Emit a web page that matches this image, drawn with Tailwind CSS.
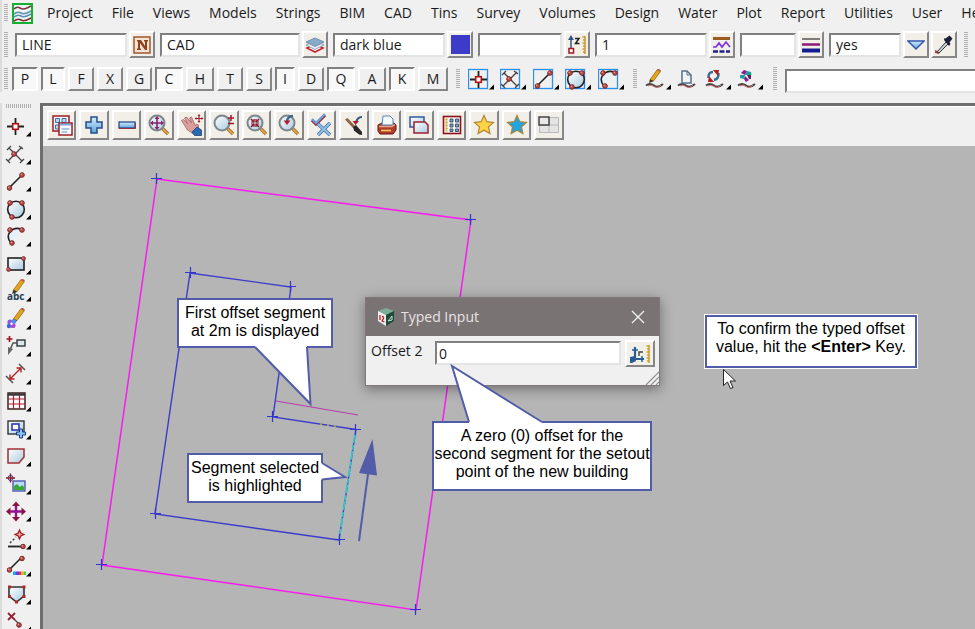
<!DOCTYPE html>
<html lang="en">
<head>
    <meta charset="UTF-8">
    <meta name="viewport" content="width=device-width, initial-scale=1.0">
    <title>Typed Input</title>
    <script src="https://cdn.jsdelivr.net/npm/@tailwindcss/browser@4"></script>
</head>
<body class="h-screen flex flex-col overflow-hidden bg-[#f0f0f0] text-[#1a1a1a] text-sm font-['Open_Sans','Noto_Sans',sans-serif]">

    <!-- Shared icon symbols -->
    <svg class="absolute w-0 h-0" aria-hidden="true">
        <defs>
            <linearGradient id="glass" x1="0" y1="0" x2="1" y2="1"><stop offset="0" stop-color="#fff"/><stop offset="1" stop-color="#a9cbe0"/></linearGradient>
            <linearGradient id="blue" x1="0" y1="0" x2="0" y2="1"><stop offset="0" stop-color="#d4ecfa"/><stop offset="1" stop-color="#5aa4dc"/></linearGradient>
            <pattern id="dots-v" width="4" height="2" patternUnits="userSpaceOnUse"><rect width="4" height="1" fill="#b0b0b0"/></pattern>
            <pattern id="dots-h" width="2" height="4" patternUnits="userSpaceOnUse"><rect width="1" height="4" fill="#b0b0b0"/></pattern>
        </defs>
        <symbol id="ball" viewBox="0 0 6 6"><circle cx="3" cy="3" r="2.3" fill="#b85050" stroke="#7c2020"/><circle cx="2.3" cy="2.3" r=".8" fill="#e0a0a0"/></symbol>
        <symbol id="more" viewBox="0 0 28 24"><path d="M26 17.5V22.500H21z" fill="#000"/></symbol>
        <symbol id="box" viewBox="0 0 28 24"><rect x=".5" y="2.500" width="19" height="19" fill="none" stroke="#2a90f0" stroke-width="1.300"/></symbol>

        <!-- Drawing tools -->
        <symbol id="point" viewBox="0 0 28 24"><path d="M10.500 4v5M10.500 16v5M2 12.500h5M14 12.500h5" stroke="#222" stroke-width="1.800"/><rect x="7.700" y="9.700" width="5.600" height="5.600" fill="#fff" stroke="#b01010" stroke-width="1.600"/></symbol>
        <symbol id="intersect" viewBox="0 0 28 24"><path d="M4 6l13 13M17 5L3 19M2 8l4-4M14 4l4 3M1 17l4 4M15 21l4-4" stroke="#444" stroke-width="1.300" fill="none"/><use href="#ball" x="6" y="9" width="6" height="6"/></symbol>
        <symbol id="line" viewBox="0 0 28 24"><path d="M4 19L17 6" stroke="#222" stroke-width="1.600"/><use href="#ball" x="1.500" y="16" width="6" height="6"/><use href="#ball" x="14" y="3" width="6" height="6"/></symbol>
        <symbol id="circle" viewBox="0 0 28 24"><circle cx="11" cy="12.500" r="8.300" fill="url(#glass)" stroke="#222" stroke-width="1.600"/><use href="#ball" x="2" y="3" width="6" height="6"/><use href="#ball" x="14" y="3" width="6" height="6"/><use href="#ball" x="4" y="17" width="6" height="6"/></symbol>
        <symbol id="arc" viewBox="0 0 28 24"><path d="M6 19Q2 13 5 8T16 5L12 12z" fill="#e6f0f8"/><path d="M6 19Q1 13 5 8T16 5" fill="none" stroke="#222" stroke-width="1.600"/><use href="#ball" x="2" y="3" width="6" height="6"/><use href="#ball" x="14" y="3" width="6" height="6"/><use href="#ball" x="4" y="16" width="6" height="6"/></symbol>
        <symbol id="rectangle" viewBox="0 0 28 24"><rect x="3" y="6" width="16" height="12" fill="url(#glass)" stroke="#222" stroke-width="1.600"/><use href="#ball" x="1" y="15" width="5" height="5"/><use href="#ball" x="16" y="4" width="5" height="5"/></symbol>
        <symbol id="pencil" viewBox="0 0 20 20"><path d="M5 12L13 1l4 2-8 11-5 2z" fill="#e3a51c" stroke="#8a6210" stroke-width=".8"/><path d="M13 1l1.500-1.500 3 2L17 3z" fill="#c05050"/><path d="M5 12l4 2-5 2z" fill="#333"/></symbol>
        <symbol id="text" viewBox="0 0 28 24"><use href="#pencil" x="4" y="0" width="18" height="18"/><text x="2" y="21" font-size="10" font-weight="700" fill="#24405a" font-family="Open Sans">abc</text></symbol>
        <symbol id="paint" viewBox="0 0 28 24"><use href="#pencil" x="4" y="1" width="18" height="18"/><circle cx="5" cy="15" r="2.600" fill="#8a58e0"/><circle cx="9" cy="14.500" r="2.300" fill="#4a90e8"/><circle cx="8" cy="18.500" r="2.600" fill="#b04ad8"/><circle cx="4" cy="19" r="2.200" fill="#4464d8"/><circle cx="6.500" cy="16.800" r="1.200" fill="#fff"/></symbol>
        <symbol id="leader" viewBox="0 0 28 24"><path d="M4.500 2v6M1.500 5h6" stroke="#a01020" stroke-width="1.600"/><rect x="12" y="6" width="8" height="6" fill="#d8e8f0" stroke="#333" stroke-width="1.400"/><path d="M12 9H8L5 16" fill="none" stroke="#555" stroke-width="1.500"/><path d="M3 13l5 2-5 6z" fill="#666"/></symbol>
        <symbol id="dimension" viewBox="0 0 28 24"><path d="M14 2l6 6M1 14l7 7" stroke="#555" stroke-width="1.600"/><path d="M5 17L16 6M5 12.500V17h4.500M11.500 6H16v4.500" fill="none" stroke="#b82020" stroke-width="1.400"/></symbol>
        <symbol id="table" viewBox="0 0 28 24"><rect x="3" y="4" width="17" height="16" fill="#fff" stroke="#3a2020" stroke-width="1.500"/><path d="M3 5.500h17" stroke="#3a3a3a" stroke-width="2.500"/><path d="M3 10h17M3 15h17M8.500 6v14M14.500 6v14" stroke="#b01c30" stroke-width="1.200"/></symbol>
        <symbol id="insert" viewBox="0 0 28 24"><rect x="3" y="4" width="16" height="13" fill="url(#glass)" stroke="#333" stroke-width="1.400"/><rect x="7" y="7" width="7" height="6" fill="#fff" stroke="#2a3ab0" stroke-width="1.600"/><path d="M14.500 12h3v3h3v3h-3v3h-3v-3h-3v-3h3z" fill="#8ac4f0" stroke="#1a3c80"/></symbol>
        <symbol id="polygon" viewBox="0 0 28 24"><path d="M3 5h16v8l-5 6H3z" fill="url(#glass)" stroke="#a03030" stroke-width="1.500"/></symbol>
        <symbol id="image" viewBox="0 0 28 24"><rect x="8" y="9" width="12" height="10" fill="#b8dcf4" stroke="#5058b0" stroke-width="1.400"/><path d="M9 18v-4l3-2 3 3 2-2 2 2v3z" fill="#3ca838"/><circle cx="5.500" cy="6" r="2.500" fill="#fff" stroke="#2a3c90"/><path d="M5.500 1.500v9M1 6h9" stroke="#901828" stroke-width="1.400"/></symbol>
        <symbol id="move" viewBox="0 0 28 24"><path d="M11 5v15M3.500 12.500h15" stroke="#901090" stroke-width="2.400"/><path d="M11 2.500l4 4.500H7zM11 22.500l4-4.500H7zM1 12.500l4.500-4v8zM21 12.500l-4.500-4v8z" fill="#8a1440"/></symbol>
        <symbol id="snap" viewBox="0 0 28 24"><path d="M3 19.500h14" stroke="#222" stroke-width="1.800"/><path d="M5 16l6-6" stroke="#333" stroke-width="1.400" stroke-dasharray="2 2"/><path d="M14.500 3l1.300 3 3.200 1.500-3.200 1.500-1.300 3-1.300-3L10 7.500 13.200 6z" fill="#e8a0a0" stroke="#a01818" stroke-width="1.200"/><use href="#ball" x="15" y="16.500" width="6" height="6"/></symbol>
        <symbol id="colour" viewBox="0 0 28 24"><path d="M4 16L16 4" stroke="#222" stroke-width="1.600"/><use href="#ball" x="1.500" y="13" width="6" height="6"/><use href="#ball" x="14" y="1.500" width="6" height="6"/><path d="M8 17.500h3v3.500H8z" fill="#18a0f0"/><path d="M11 17.500h3v3.500h-3z" fill="#7038e0"/><path d="M14 17.500h2.500v3.500H14z" fill="#e83060"/><path d="M16.500 17.500h2.500v3.500h-2.500z" fill="#f0b020"/><path d="M19 17.500h2v3.500h-2z" fill="#30d850"/></symbol>
        <symbol id="fence" viewBox="0 0 28 24"><path d="M4 5h15v9l-7.500 6L4 14z" fill="url(#glass)" stroke="#333" stroke-width="1.600"/><path d="M3 3.500h3v3H3zM17.500 3.500h3v3h-3zM17.500 13h3v3h-3zM3 13h3v3H3zM10 18.500h3v3h-3z" fill="#b02828"/></symbol>
        <symbol id="delete" viewBox="0 0 28 24"><path d="M3 4l7 7M10 4l-7 7" stroke="#982030" stroke-width="1.800"/><path d="M10 11l3 3" stroke="#555" stroke-width="1.400"/><use href="#ball" x="11" y="13" width="6" height="6"/></symbol>

        <!-- Edit tools -->
        <symbol id="wave" viewBox="0 0 28 24"><path d="M1 18.500q4-3 8 0t9-1.500" fill="none" stroke="#444" stroke-width="2"/><path d="M3 19q3-2 6 .5t7-1.500" fill="none" stroke="#d07070"/></symbol>
        <symbol id="edit" viewBox="0 0 28 24"><use href="#wave"/><use href="#pencil" x="1" y="2" width="17" height="17"/></symbol>
        <symbol id="page" viewBox="0 0 28 24"><use href="#wave"/><path d="M5 4h5l4 4v8H5z" fill="#eef4f8" stroke="#56708a" stroke-width="1.500"/><path d="M10 4v4h4" fill="none" stroke="#56708a"/></symbol>
        <symbol id="swap" viewBox="0 0 28 24"><use href="#wave"/><path d="M3.500 11Q3 5 8 5" fill="none" stroke="#3a6c9a" stroke-width="2.400"/><path d="M13.500 6q.5 6-4.500 7" fill="none" stroke="#3a6c9a" stroke-width="2.400"/><path d="M8 3h6l-1 6zM9 15H3l1-6z" fill="#b02020"/></symbol>
        <symbol id="spin" viewBox="0 0 28 24"><use href="#wave"/><path d="M8 8L4 6l3-3 3 1z" fill="#8a1890"/><path d="M8 8l2-4 4 1 .5 3z" fill="#1aa098"/><path d="M8 9l4 4-3 2-2-3z" fill="#8a1890"/><path d="M8 8l-1 4-4-1v-3z" fill="#1aa098"/><path d="M10 8l4 0 0 4-2 0z" fill="#5c2060"/></symbol>

        <!-- View toolbar -->
        <symbol id="lens" viewBox="0 0 24 24"><path d="M15 15l6 6" stroke="#a86a20" stroke-width="3.400"/><path d="M15 15l6 6" stroke="#e8b050" stroke-width="1.500"/><circle cx="10" cy="10" r="7.500" fill="url(#glass)" stroke="#7c868c" stroke-width="2"/></symbol>
        <symbol id="v-menu" viewBox="0 0 24 24"><rect x="3" y="3" width="16" height="15" fill="#f4f8fc" stroke="#a01c28" stroke-width="1.500"/><path d="M5.500 5.500h4v4h-4zM12 5.500h4v4h-4zM5.500 12h4v4h-4z" fill="#b8d8f0" stroke="#3c70b0"/><rect x="9" y="10" width="13" height="12" fill="#fff" stroke="#a01c28" stroke-width="1.500"/><path d="M10 11.500h11" stroke="#70a8dc" stroke-width="2"/><path d="M11.500 16h8M11.500 19h6" stroke="#5a90c8"/></symbol>
        <symbol id="v-plus" viewBox="0 0 24 24"><path d="M9 4h6v5h5v6h-5v5H9v-5H4V9h5z" fill="url(#blue)" stroke="#284c88" stroke-width="1.500"/></symbol>
        <symbol id="v-minus" viewBox="0 0 24 24"><rect x="4" y="9" width="16" height="6" fill="url(#blue)" stroke="#284c88" stroke-width="1.300"/><path d="M4 15.500h16.500V10" fill="none" stroke="#983040"/></symbol>
        <symbol id="v-fit" viewBox="0 0 24 24"><use href="#lens"/><path d="M10 5v10M5 10h10" stroke="#8a2068" stroke-width="1.600"/><path d="M10 3l2.500 3h-5zM10 17l2.500-3h-5zM3 10l3-2.500v5zM17 10l-3-2.500v5z" fill="#8a2068"/></symbol>
        <symbol id="v-pan" viewBox="0 0 24 24"><path d="M1.500 7.500l2-1 4 4-3-5.500 2-1 5 6-2-5 2-1 4 9 1-2 2 1v4l-5 5-6-4z" fill="#dc9c9c" stroke="#a06868" stroke-width=".8"/><path d="M12 19l5-5 4.500 3v5.500h-7z" fill="#2a68b0" stroke="#1c4478" stroke-width=".8"/><path d="M19 2v7M15.500 5.500h7" stroke="#a02030" stroke-width="1.200"/><path d="M19 1l1.500 2h-3zM19 10l1.500-2h-3zM14.500 5.500l2-1.500v3zM23.500 5.500l-2-1.500v3z" fill="#a02030"/></symbol>
        <symbol id="v-scale" viewBox="0 0 24 24"><use href="#lens"/><path d="M19 2v6M16 5h6M16 10.500h6" stroke="#a81828" stroke-width="1.500"/></symbol>
        <symbol id="v-shrink" viewBox="0 0 24 24"><use href="#lens"/><path d="M6 6l3 3M14 6l-3 3M6 14l3-3M14 14l-3-3" stroke="#8a1020" stroke-width="1.500"/><path d="M6 9h3V6M14 9h-3V6M6 11h3v3M14 11h-3v3" fill="none" stroke="#8a1020" stroke-width="1.200"/></symbol>
        <symbol id="v-prev" viewBox="0 0 24 24"><use href="#lens"/><path d="M16 3q-6 0-6 6" fill="none" stroke="#3c6890" stroke-width="2.400"/><path d="M6.500 7.500h7L10 12z" fill="#b02030"/></symbol>
        <symbol id="v-check" viewBox="0 0 24 24"><path d="M2 7l4 4 9-9" fill="none" stroke="#982c40" stroke-width="3.200"/><path d="M2 6l4 4 9-9" fill="none" stroke="#68a4dc" stroke-width="2.200"/><path d="M8 11l12 11M20 10L8 22" stroke="#4c6c98" stroke-width="3.600"/><path d="M8 11l12 11M20 10L8 22" stroke="#8cc0ec" stroke-width="2.200"/></symbol>
        <symbol id="v-brush" viewBox="0 0 24 24"><path d="M3 6.500L5.500 5l7.500 8-2 2z" fill="#8c6444"/><path d="M11 14l3-2 6 7v3l-3-.5-5-4z" fill="#282828"/><path d="M20 4q-5 0-6 6" fill="none" stroke="#37587c" stroke-width="2.200"/><path d="M10.500 8h6.500l-3.500 4z" fill="#b02030"/></symbol>
        <symbol id="v-print" viewBox="0 0 24 24"><path d="M3 12l4-2h12l2 2v5l-3 4H5l-2-3z" fill="#b03c2c" stroke="#681410"/><path d="M8 3h7l3 3v6H7z" fill="#f4faff" stroke="#4c84b8"/><path d="M4 13.500h13l3-2" fill="none" stroke="#e8a890" stroke-width="1.500"/><path d="M6 17.500h10" stroke="#f0cc60" stroke-width="1.600"/></symbol>
        <symbol id="v-copy" viewBox="0 0 24 24"><rect x="3" y="4" width="14" height="10" fill="url(#glass)" stroke="#32589c" stroke-width="1.500"/><path d="M7 9h11l3 3v8H7z" fill="url(#glass)" stroke="#9c2030" stroke-width="1.500"/></symbol>
        <symbol id="v-grid" viewBox="0 0 24 24"><rect x="3.500" y="3.500" width="17" height="17" fill="#fdf6ec" stroke="#8c1020" stroke-width="1.600"/><path d="M10 6h3v3h-3zM15.500 6h3v3h-3zM10 11h3v3h-3zM15.500 11h3v3h-3zM10 16h3v2.500h-3zM15.500 16h3v2.500h-3z" fill="#7aa4d0" stroke="#203c60" stroke-width=".8"/><path d="M6.500 5.500v13" stroke="#c0a020" stroke-width="2" stroke-dasharray="2 1"/></symbol>
        <symbol id="v-star" viewBox="0 0 24 24"><path d="M12 2.500l2.800 6.200 6.700.7-5 4.500 1.400 6.700L12 17.200l-5.900 3.400 1.400-6.700-5-4.500 6.700-.7z" fill="currentColor" stroke="#b08434" stroke-width="1.200"/></symbol>
        <symbol id="v-layout" viewBox="0 0 24 24"><path d="M2.500 4.500h19v15h-19zM12 4.500v15M2.500 12h19" fill="#e4e4e4" stroke="#b8b8b8"/><rect x="2" y="4" width="10" height="8" fill="#e8e8e8" stroke="#444" stroke-width="1.500"/></symbol>
    </svg>

    <header class="shrink-0 border-l-2 border-[#dcdcdc]">
        <!-- Menu bar -->
        <nav class="flex h-[26px] items-center whitespace-nowrap overflow-hidden">
            <svg class="shrink-0 ml-0.5 mr-1.5" width="4" height="18"><rect width="4" height="18" fill="url(#dots-v)"/></svg>
            <svg class="shrink-0 -ml-0.5 mr-[14px]" width="21" height="21" viewBox="0 0 21 21"><rect x="1" y="1" width="19" height="19" fill="#eef4f4" stroke="#16b030" stroke-width="2"/><path d="M2 6q3-3 6-1t7 0l4-2" fill="none" stroke="#7c3440" stroke-width="1.600"/><path d="M2 11q4-3 7-1t10-2M2 14q4-3 7-1t10-2" fill="none" stroke="#5890b8" stroke-width="1.600"/><path d="M2 18q4-3 7-1t10-2" fill="none" stroke="#802c38" stroke-width="1.600"/></svg>
            <div class="flex gap-[19px]">
                <a href="#">Project</a>
                <a href="#">File</a>
                <a href="#">Views</a>
                <a href="#">Models</a>
                <a href="#">Strings</a>
                <a href="#">BIM</a>
                <a href="#">CAD</a>
                <a href="#">Tins</a>
                <a href="#">Survey</a>
                <a href="#">Volumes</a>
                <a href="#">Design</a>
                <a href="#">Water</a>
                <a href="#">Plot</a>
                <a href="#">Report</a>
                <a href="#">Utilities</a>
                <a href="#">User</a>
                <a href="#">Help</a>
            </div>
        </nav>

        <!-- String attributes -->
        <div class="mt-[5px] flex h-[27px] items-center gap-[5px] *:shrink-0 [&_input]:h-6 [&_input]:min-w-0 [&_input]:border-2 [&_input]:border-t-[#808080] [&_input]:border-l-[#808080] [&_input]:border-b-[#e4e4e4] [&_input]:border-r-[#e4e4e4] [&_input]:bg-white [&_input]:px-[5px] [&_button]:flex [&_button]:h-[27px] [&_button]:w-[26px] [&_button]:items-center [&_button]:justify-center [&_button]:border-2 [&_button]:border-t-white [&_button]:border-l-white [&_button]:border-b-[#868686] [&_button]:border-r-[#868686] [&_button]:bg-[#f1efe8]">
            <svg class="ml-0.5 mr-0.5" width="4" height="25"><rect width="4" height="25" fill="url(#dots-v)"/></svg>
            <div class="flex items-center gap-0.5">
                <input class="w-28" value="LINE" aria-label="Name">
                <button aria-label="Pick name"><svg width="18" height="18" viewBox="0 0 18 18"><rect x="1" y="1" width="16" height="16" fill="#f4e4d4" stroke="#a05830" stroke-width="1.500"/><path d="M4 4h4l4 6V5.500h-1V4h4v1.500h-1V14h-2L7 7v5.500h1V14H4v-1.500h1v-7H4z" fill="#94401c"/></svg></button>
            </div>
            <div class="flex items-center gap-0.5">
                <input class="w-[140px]" value="CAD" aria-label="Model">
                <button aria-label="Pick model"><svg width="20" height="18" viewBox="0 0 20 18"><path d="M2 12l8 4 8-4-8-4z" fill="#fff" stroke="#c82030" stroke-width="1.600"/><path d="M1 9l9 4.500L19 9l-9-4z" fill="#e8eef4" stroke="#90a4b4"/><path d="M1 6l9 4.500L19 6l-9-4z" fill="#88acc8" stroke="#6c90ac"/></svg></button>
            </div>
            <div class="flex items-center gap-0.5">
                <input class="w-28" value="dark blue" aria-label="Colour">
                <button aria-label="Pick colour"><span class="size-[19px] bg-[#3c3cc8]"></span></button>
            </div>
            <div class="flex items-center gap-0.5">
                <input class="w-[84px]" aria-label="Height">
                <button aria-label="Pick height"><svg width="20" height="20" viewBox="0 0 20 20"><path d="M4 3v11" stroke="#345880" stroke-width="1.500"/><path d="M4 0l3 5H1z" fill="#345880"/><rect x="2" y="13.500" width="4.500" height="4.500" fill="#fff" stroke="#a01828" stroke-width="1.500"/><path d="M8 3.500h4L8.500 8.500H12.500" fill="none" stroke="#222" stroke-width="1.500"/><path d="M18 1v18M15.500 2H18M16 5h2M15.500 8H18M16 11h2M15.500 14H18M16 17h2" stroke="#d09c30" stroke-width="1.600"/></svg></button>
            </div>
            <div class="flex items-center gap-0.5">
                <input class="w-28" value="1" aria-label="Linestyle">
                <button aria-label="Pick linestyle"><svg width="20" height="18" viewBox="0 0 20 18"><path d="M1 2.500h17" stroke="#9c5c20" stroke-width="3"/><path d="M1 11h3l3-4 3 4 4-5 4 5" fill="none" stroke="#8030e8" stroke-width="1.700"/><path d="M1 15.500h17" stroke="#20208c" stroke-width="2.500" stroke-dasharray="5 1.500"/></svg></button>
            </div>
            <div class="flex items-center gap-0.5">
                <input class="w-14" aria-label="Weight">
                <button aria-label="Pick weight"><svg width="18" height="18" viewBox="0 0 18 18"><path d="M0 3h18" stroke="#555" stroke-width="1.500"/><path d="M0 8.500h18" stroke="#8c1878" stroke-width="2.500"/><path d="M0 14.500h18" stroke="#101c90" stroke-width="4"/></svg></button>
            </div>
            <div class="flex items-center gap-0.5">
                <input class="w-[72px]" value="yes" aria-label="Tinable">
                <button aria-label="Pick tinable"><svg width="18" height="14" viewBox="0 0 18 14"><path d="M1 3h16l-8 8z" fill="url(#blue)" stroke="#3054b0" stroke-width="1.400"/></svg></button>
                <button aria-label="Same as"><svg width="20" height="20" viewBox="0 0 20 20"><path d="M1 15l5 2-1 2-4-1z" fill="#b04040"/><path d="M3 17l9-10 2 2-9 9z" fill="#c8d4dc" stroke="#333"/><path d="M10 5l5 6 1.500-2-1-1.500 3-4-3-3-4 3L10.500 3z" fill="#1c2038"/></svg></button>
            </div>
            <svg class="ml-0.5" width="4" height="25"><rect width="4" height="25" fill="url(#dots-v)"/></svg>
        </div>

        <!-- Snaps and CAD tools -->
        <div class="mt-2 flex h-[26px] items-center">
            <svg class="shrink-0 ml-0.5 mr-1" width="4" height="22"><rect width="4" height="22" fill="url(#dots-v)"/></svg>
            <div class="flex shrink-0 gap-[3px] *:h-6 *:border-2 *:border-t-white *:border-l-white *:border-b-[#868686] *:border-r-[#868686] *:leading-5 *:aria-pressed:border-t-[#808080] *:aria-pressed:border-l-[#808080] *:aria-pressed:border-b-white *:aria-pressed:border-r-white *:aria-pressed:bg-[#f8f8f8]">
                <button class="w-[26px]" aria-pressed="true">P</button>
                <button class="w-6" aria-pressed="true">L</button>
                <button class="w-[26px]">F</button>
                <button class="w-[26px]">X</button>
                <button class="w-[26px]">G</button>
                <button class="w-7" aria-pressed="true">C</button>
                <button class="w-7">H</button>
                <button class="w-[26px]">T</button>
                <button class="w-[26px]">S</button>
                <button class="w-5" aria-pressed="true">I</button>
                <button class="w-[26px]">D</button>
                <button class="w-7" aria-pressed="true">Q</button>
                <button class="w-7">A</button>
                <button class="w-[26px]" aria-pressed="true">K</button>
                <button class="w-[30px]">M</button>
            </div>
            <svg class="shrink-0 mx-2" width="4" height="20"><rect width="4" height="20" fill="url(#dots-v)"/></svg>
            <div class="flex shrink-0 gap-[5px] *:odd:w-[27px] *:even:w-7 [&_svg]:h-6 [&_svg]:w-7">
                <button aria-label="Point"><svg><use href="#box"/><use href="#point"/><use href="#more"/></svg></button>
                <button aria-label="Intersection"><svg><use href="#box"/><use href="#intersect"/><use href="#more"/></svg></button>
                <button aria-label="Line"><svg><use href="#box"/><use href="#line"/><use href="#more"/></svg></button>
                <button aria-label="Circle"><svg><use href="#box"/><use href="#circle"/><use href="#more"/></svg></button>
                <button aria-label="Arc"><svg><use href="#box"/><use href="#arc"/><use href="#more"/></svg></button>
            </div>
            <svg class="shrink-0 mx-2" width="4" height="20"><rect width="4" height="20" fill="url(#dots-v)"/></svg>
            <div class="flex shrink-0 gap-1 [&_svg]:h-6 [&_svg]:w-7">
                <button aria-label="Edit"><svg><use href="#edit"/><use href="#more"/></svg></button>
                <button class="w-6" aria-label="Duplicate"><svg><use href="#page"/></svg></button>
                <button aria-label="Reverse"><svg><use href="#swap"/><use href="#more"/></svg></button>
                <button aria-label="Transform"><svg><use href="#spin"/><use href="#more"/></svg></button>
            </div>
            <svg class="shrink-0 mx-2" width="4" height="24"><rect width="4" height="24" fill="url(#dots-v)"/></svg>
            <input class="mt-1 h-6 min-w-0 flex-1 border-2 border-r-0 border-t-[#808080] border-l-[#808080] border-b-[#e4e4e4] bg-white px-1" aria-label="Message">
        </div>
    </header>

    <div class="mt-[11px] flex min-h-0 flex-1">
        <!-- CAD toolbar -->
        <aside class="w-10 shrink-0 overflow-hidden border-l-2 border-[#dcdcdc] pt-px">
            <svg class="ml-1 mb-1" width="25" height="4"><rect width="25" height="4" fill="url(#dots-h)"/></svg>
            <div class="flex flex-col pl-[3px] *:shrink-0 *:w-7 *:odd:h-7 *:even:h-[27px] [&_svg]:h-6 [&_svg]:w-7">
                <button aria-label="Point"><svg><use href="#point"/><use href="#more"/></svg></button>
                <button aria-label="Intersection"><svg><use href="#intersect"/><use href="#more"/></svg></button>
                <button aria-label="Line"><svg><use href="#line"/><use href="#more"/></svg></button>
                <button aria-label="Circle"><svg><use href="#circle"/><use href="#more"/></svg></button>
                <button aria-label="Arc"><svg><use href="#arc"/><use href="#more"/></svg></button>
                <button aria-label="Rectangle"><svg><use href="#rectangle"/><use href="#more"/></svg></button>
                <button aria-label="Text"><svg><use href="#text"/><use href="#more"/></svg></button>
                <button aria-label="Paint"><svg><use href="#paint"/><use href="#more"/></svg></button>
                <button aria-label="Leader"><svg><use href="#leader"/><use href="#more"/></svg></button>
                <button aria-label="Dimension"><svg><use href="#dimension"/><use href="#more"/></svg></button>
                <button aria-label="Table"><svg><use href="#table"/><use href="#more"/></svg></button>
                <button aria-label="Insert"><svg><use href="#insert"/><use href="#more"/></svg></button>
                <button aria-label="Polygon"><svg><use href="#polygon"/><use href="#more"/></svg></button>
                <button aria-label="Image"><svg><use href="#image"/><use href="#more"/></svg></button>
                <button aria-label="Move"><svg><use href="#move"/><use href="#more"/></svg></button>
                <button aria-label="Snap"><svg><use href="#snap"/><use href="#more"/></svg></button>
                <button aria-label="Colour"><svg><use href="#colour"/><use href="#more"/></svg></button>
                <button aria-label="Fence"><svg><use href="#fence"/><use href="#more"/></svg></button>
                <button aria-label="Delete"><svg><use href="#delete"/><use href="#more"/></svg></button>
            </div>
        </aside>

        <!-- Plan view -->
        <section class="flex min-w-0 flex-1 flex-col border-t-3 border-l-3 border-[#6e6e6e]">
            <div class="flex h-10 shrink-0 items-start gap-[3px] border-t border-white pl-1 pt-[3px] *:flex *:h-[30px] *:odd:w-[29px] *:even:w-[30px] *:shrink-0 *:items-center *:justify-center *:border-2 *:border-t-white *:border-l-white *:border-b-[#868686] *:border-r-[#868686] *:bg-[#f1efe8] [&_svg]:size-6">
                <button aria-label="Menu"><svg><use href="#v-menu"/></svg></button>
                <button aria-label="Add models"><svg><use href="#v-plus"/></svg></button>
                <button aria-label="Remove models"><svg><use href="#v-minus"/></svg></button>
                <button aria-label="Fit"><svg><use href="#v-fit"/></svg></button>
                <button aria-label="Pan"><svg><use href="#v-pan"/></svg></button>
                <button aria-label="Zoom"><svg><use href="#v-scale"/></svg></button>
                <button aria-label="Shrink"><svg><use href="#v-shrink"/></svg></button>
                <button aria-label="Previous"><svg><use href="#v-prev"/></svg></button>
                <button aria-label="Toggle"><svg><use href="#v-check"/></svg></button>
                <button aria-label="Redraw"><svg><use href="#v-brush"/></svg></button>
                <button aria-label="Plot"><svg><use href="#v-print"/></svg></button>
                <button aria-label="Copy view"><svg><use href="#v-copy"/></svg></button>
                <button aria-label="Settings"><svg><use href="#v-grid"/></svg></button>
                <button aria-label="Favourites"><svg class="text-[#fcd444]"><use href="#v-star"/></svg></button>
                <button aria-label="Snap favourites"><svg class="text-[#20a4e4]"><use href="#v-star"/></svg></button>
                <button aria-label="Layout"><svg><use href="#v-layout"/></svg></button>
            </div>

            <main class="relative min-h-0 flex-1 overflow-hidden bg-[#b5b5b5]">
                <!-- Lot boundary, building and offset -->
                <svg class="absolute left-0 top-0" width="932" height="483" viewBox="43 146 932 483" fill="none">
                    <path d="M157 179L471 220 416 610 102 565z" stroke="#f81cf0" stroke-width="1.500"/>
                    <path d="M356 429.500L273 417 291 287 190 273 155 514 339 540" stroke="#3c3ccc" stroke-width="1.400"/>
                    <path d="M356 429L339 540" stroke="#3c3ccc" stroke-width="1.400"/>
                    <path d="M355 434L339 540" stroke="#30c8c8" stroke-width="1.700" stroke-dasharray="9 2 5 1"/>
                    <path d="M320 424L340 427" stroke="#b8b030" stroke-width="1.500" stroke-dasharray="2 5"/>
                    <path d="M276 401L358 415" stroke="#b83cb0" stroke-width="1.200"/>
                    <path d="M151 178.500h11M156.500 173v11M465 219.500h11M470.500 214v11M410 609.500h11M415.500 604v11M96 564.500h11M101.500 559v11M185 272.500h11M190.500 267v11M285 286.500h11M290.500 281v11M267 416.500h11M272.500 411v11M350 429.500h11M355.500 424v11M334 539.500h11M339.500 534v11M150 513.500h11M155.500 508v11" stroke="#3434cc" stroke-width="1.200"/>
                    <path d="M359 541L368 474" stroke="#525ca8" stroke-width="2"/><path d="M372.500 439L377 475.500 359 473z" fill="#525ca8"/>
                </svg>

                <!-- Typed Input dialog -->
                <form class="absolute left-[322px] top-[151px] w-[295px] border border-[#807878] bg-[#f0f0f0] shadow-[0_3px_12px_rgba(0,0,0,0.4)]">
                    <div class="flex h-[38px] items-center bg-[#7a7373] pl-[11px] pr-[14px] text-[#e8e4e4]">
                        <svg class="mr-1.5" width="18" height="20" viewBox="0 0 18 20"><path d="M9 1l8 3-8 4-8-4z" fill="#7cae98"/><path d="M1 4l8 4v11l-8-5z" fill="#f0f0f0"/><path d="M17 4L9 8v11l8-5z" fill="#1c4c38"/><path d="M3 8v5M5 9.500q2 0 1.500 2L5 14l2.500 1" fill="none" stroke="#c02020" stroke-width="1.300"/><path d="M11 14l4-5v4z" fill="none" stroke="#d0e0d8"/></svg>
                        <h2>Typed Input</h2>
                        <button type="button" class="ml-auto" aria-label="Close"><svg width="14" height="14" viewBox="0 0 14 14"><path d="M1 1l12 12M13 1L1 13" stroke="#f4f4f4" stroke-width="1.300"/></svg></button>
                    </div>
                    <div class="flex h-[49px] items-start pl-[5px] pr-1 pt-1">
                        <label for="offset" class="w-16 shrink-0 pt-px">Offset 2</label>
                        <input id="offset" value="0" class="mt-px h-6 min-w-0 flex-1 border-2 border-t-[#808080] border-l-[#808080] border-b-[#e4e4e4] border-r-[#e4e4e4] bg-white px-0.5">
                        <button type="button" class="ml-1 flex h-[27px] w-[30px] items-center justify-center border-2 border-t-white border-l-white border-b-[#868686] border-r-[#868686] bg-[#f1efe8]" aria-label="Measure"><svg width="22" height="20" viewBox="0 0 22 20"><path d="M6 3v12h9" fill="none" stroke="#285c94" stroke-width="2.200"/><path d="M10 12V8h4" fill="none" stroke="#444" stroke-width="1.400"/><path d="M1 13l5-1 1 5-4 2H1z" fill="#285c94"/><path d="M3 6h6M13 12v6" stroke="#285c94" stroke-width="1.500"/><path d="M20 1v18M17.500 2H20M18 5h2M17.500 8H20M18 11h2M17.500 14H20M18 17h2" stroke="#d0a030" stroke-width="1.600"/></svg></button>
                    </div>
                    <svg class="absolute bottom-0 right-0" width="14" height="14" viewBox="0 0 14 14"><path d="M1 14L14 1M6 14l8-8M11 14l3-3" stroke="#909090" stroke-width="1.200"/></svg>
                </form>

                <!-- Callouts -->
                <div class="*:absolute *:whitespace-nowrap *:border-2 *:border-[#525ca8] *:bg-white *:text-center *:text-black *:text-base *:leading-[18px] *:font-['Liberation_Sans',Arial,sans-serif]">
                    <p class="left-[134px] top-[152px] h-[50px] w-[156px] pt-1">First offset segment<br>at 2m is displayed</p>
                    <p class="left-[144px] top-[307px] h-[50px] w-[136px] pt-1">Segment selected<br>is highlighted</p>
                    <p class="left-[389px] top-[275px] h-[70px] w-[220px] pt-1">A zero (0) offset for the<br>second segment for the setout<br>point of the new building</p>
                    <p class="left-[662px] top-[169px] h-[53px] w-[212px] pt-[3px] outline outline-white">To confirm the typed offset<br>value, hit the <b>&lt;Enter&gt;</b> Key.</p>
                </div>
                <svg class="pointer-events-none absolute left-0 top-0" width="932" height="483" viewBox="43 146 932 483">
                    <g fill="#fff" stroke="#525ca8" stroke-width="2">
                        <path d="M255 345.500V348L310.500 404 307 348V345.500" stroke="none"/><path d="M255 347L310.500 404 307 347" fill="none"/>
                        <path d="M320.500 463H322L345 477 322 479.500H320.500" stroke="none"/><path d="M322 463L345 477 322 479.500" fill="none"/>
                        <path d="M469 424V422L452 366 542 422V424" stroke="none"/><path d="M469 422L452 366 542 422" fill="none"/>
                    </g>
                    <path d="M723.500 369.500v16l4-3.500 3 6.500 2.500-1-3-6.500h5.500z" fill="#fff" stroke="#222"/>
                </svg>
            </main>
        </section>
    </div>
</body>
</html>
